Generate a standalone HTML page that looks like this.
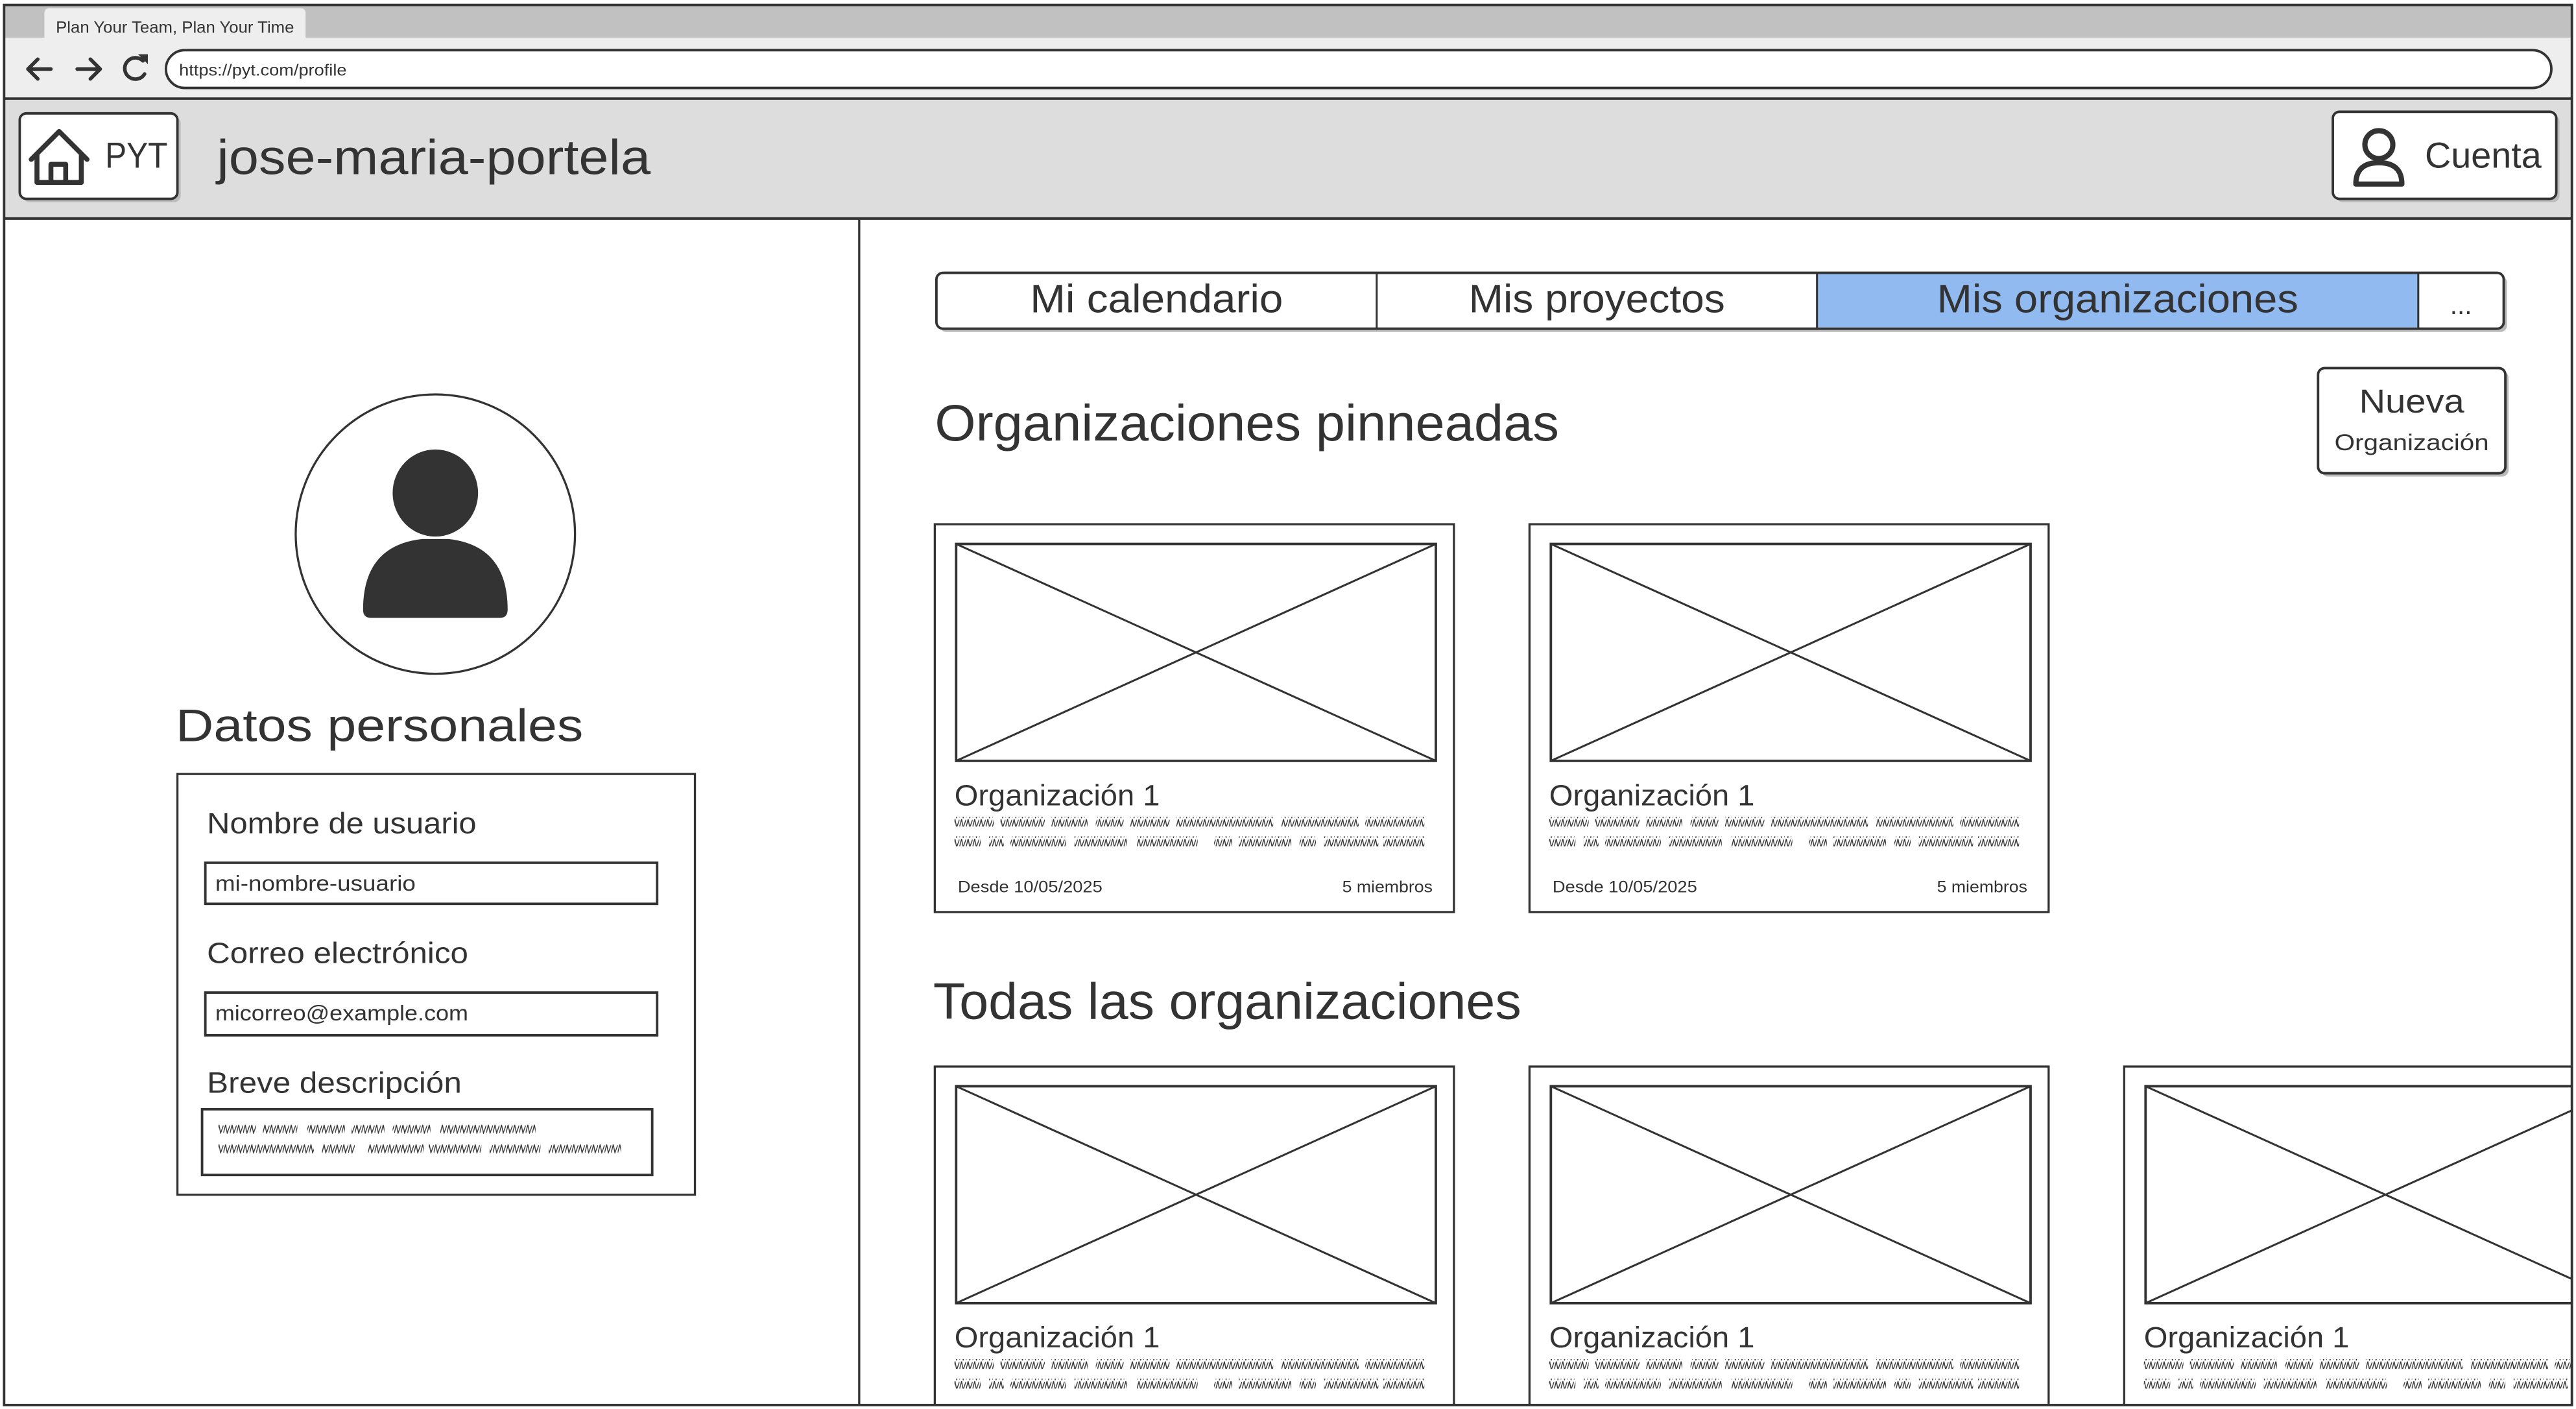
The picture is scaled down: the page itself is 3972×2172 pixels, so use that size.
<!DOCTYPE html>
<html><head><meta charset="utf-8">
<style>
html,body{margin:0;padding:0;background:#fff;overflow:hidden;}
svg{display:block;}
text{font-family:"Liberation Sans",sans-serif;fill:#333;}
</style></head>
<body>
<svg width="3972" height="2172" viewBox="0 0 1568 857.4" xmlns="http://www.w3.org/2000/svg">
<defs>
<pattern id="zz" width="4" height="6" patternUnits="userSpaceOnUse">
<path d="M0 5.5 L1.3 0.5 L2.3 5.5 L4 0.8" fill="none" stroke="#333" stroke-width="0.55"/>
</pattern>
</defs>
<rect x="0" y="0" width="1568" height="857.4" fill="#fff"/>
<!-- browser chrome -->
<rect x="2" y="3" width="1564" height="20" fill="#c1c1c1"/>
<path d="M27 24 V8 Q27 5 30 5 H183 Q186 5 186 8 V24 Z" fill="#eee"/>
<text x="34" y="20" font-size="10" textLength="145" lengthAdjust="spacingAndGlyphs">Plan Your Team, Plan Your Time</text>
<rect x="2" y="23" width="1564" height="37" fill="#eee"/>
<rect x="101" y="30.5" width="1452" height="23" rx="11.5" fill="#fff" stroke="#333" stroke-width="1.5"/>
<text x="109" y="46" font-size="10" textLength="102" lengthAdjust="spacingAndGlyphs">https://pyt.com/profile</text>
<g fill="none" stroke="#333" stroke-width="2.2" stroke-linecap="round" stroke-linejoin="round">
<path d="M31 42 H17 M23 36 L17 42 L23 48"/>
<path d="M47 42 H61 M55 36 L61 42 L55 48"/>
<path d="M87 37 A6.5 6.5 0 1 0 88 45"/>
</g>
<path d="M84 33 L90 33 L90 39 Z" fill="#333"/>
<!-- header -->
<rect x="2" y="60" width="1564" height="73" fill="#ddd"/>
<line x1="2" y1="60" x2="1566" y2="60" stroke="#333" stroke-width="1.5"/>
<line x1="2" y1="133" x2="1566" y2="133" stroke="#333" stroke-width="1.5"/>
<rect x="14" y="71" width="96" height="52" rx="4" fill="#bbb"/>
<rect x="12" y="69" width="96" height="52" rx="4" fill="#fff" stroke="#333" stroke-width="1.5"/>
<g fill="none" stroke="#333" stroke-width="3" stroke-linejoin="round" stroke-linecap="round">
<path d="M19 97 L36 80 L53 97"/>
<path d="M22.5 94 V111 H49.5 V94"/>
<path d="M31 111 V100 H40 V111"/>
</g>
<text x="64" y="102" font-size="22" textLength="38" lengthAdjust="spacingAndGlyphs">PYT</text>
<text x="132" y="106" font-size="30" textLength="264" lengthAdjust="spacingAndGlyphs">jose-maria-portela</text>
<rect x="1422" y="70" width="136" height="53" rx="4" fill="#bbb"/>
<rect x="1420" y="68" width="136" height="53" rx="4" fill="#fff" stroke="#333" stroke-width="1.5"/>
<circle cx="1448" cy="88" r="8.5" fill="none" stroke="#333" stroke-width="3.2"/>
<path d="M1434 112 Q1434 99 1448 99 Q1462 99 1462 112 Z" fill="none" stroke="#333" stroke-width="3.2" stroke-linejoin="round"/>
<text x="1476" y="102" font-size="22" textLength="71" lengthAdjust="spacingAndGlyphs">Cuenta</text>
<line x1="523" y1="133" x2="523" y2="855" stroke="#333" stroke-width="1.3"/>
<!-- avatar -->
<ellipse cx="265" cy="325" rx="85" ry="85" fill="#fff" stroke="#333" stroke-width="1.3"/>
<ellipse cx="265" cy="300" rx="26" ry="26.5" fill="#333"/>
<path d="M221 371 Q221 332 257 328 H273 Q309 332 309 371 Q309 376 304 376 H226 Q221 376 221 371 Z" fill="#333"/>
<text x="107" y="451" font-size="28" textLength="248" lengthAdjust="spacingAndGlyphs">Datos personales</text>
<!-- form -->
<rect x="108" y="471" width="315" height="256" fill="#fff" stroke="#333" stroke-width="1.3"/>
<text x="126" y="507" font-size="18" textLength="164" lengthAdjust="spacingAndGlyphs">Nombre de usuario</text>
<rect x="125" y="525" width="275" height="25" fill="#fff" stroke="#333" stroke-width="1.5"/>
<text x="131" y="542" font-size="13" textLength="122" lengthAdjust="spacingAndGlyphs">mi-nombre-usuario</text>
<text x="126" y="586" font-size="18" textLength="159" lengthAdjust="spacingAndGlyphs">Correo electrónico</text>
<rect x="125" y="604" width="275" height="26" fill="#fff" stroke="#333" stroke-width="1.5"/>
<text x="131" y="621" font-size="13" textLength="154" lengthAdjust="spacingAndGlyphs">micorreo@example.com</text>
<text x="126" y="665" font-size="18" textLength="155" lengthAdjust="spacingAndGlyphs">Breve descripción</text>
<rect x="123" y="675" width="274" height="40" fill="#fff" stroke="#333" stroke-width="1.5"/>
<g fill="url(#zz)">
<rect x="133" y="684" width="23" height="6"/><rect x="160" y="684" width="21" height="6"/><rect x="187" y="684" width="23" height="6"/><rect x="214" y="684" width="20" height="6"/><rect x="239" y="684" width="23" height="6"/><rect x="268" y="684" width="58" height="6"/>
<rect x="133" y="696" width="58" height="6"/><rect x="196" y="696" width="20" height="6"/><rect x="224" y="696" width="34" height="6"/><rect x="261" y="696" width="32" height="6"/><rect x="298" y="696" width="31" height="6"/><rect x="334" y="696" width="44" height="6"/>
</g>
<!-- tabs -->
<rect x="572" y="168" width="954" height="34" rx="4" fill="#bbb"/>
<rect x="570" y="166" width="954" height="34" rx="4" fill="#fff" stroke="#333" stroke-width="1.5"/>
<rect x="1106" y="166.8" width="366" height="32.4" fill="#91baf0"/>
<line x1="838" y1="166" x2="838" y2="200" stroke="#333" stroke-width="1.2"/>
<line x1="1106" y1="166" x2="1106" y2="200" stroke="#333" stroke-width="1.2"/>
<line x1="1472" y1="166" x2="1472" y2="200" stroke="#333" stroke-width="1.2"/>
<text x="704" y="190" font-size="24" text-anchor="middle" textLength="154" lengthAdjust="spacingAndGlyphs">Mi calendario</text>
<text x="972" y="190" font-size="24" text-anchor="middle" textLength="156" lengthAdjust="spacingAndGlyphs">Mis proyectos</text>
<text x="1289" y="190" font-size="24" text-anchor="middle" textLength="220" lengthAdjust="spacingAndGlyphs">Mis organizaciones</text>
<text x="1498" y="191" font-size="16" text-anchor="middle">...</text>
<text x="569" y="268" font-size="31" textLength="380" lengthAdjust="spacingAndGlyphs">Organizaciones pinneadas</text>
<rect x="1413" y="226" width="114" height="64" rx="4" fill="#bbb"/>
<rect x="1411" y="224" width="114" height="64" rx="4" fill="#fff" stroke="#333" stroke-width="1.5"/>
<text x="1468" y="251" font-size="20" text-anchor="middle" textLength="64" lengthAdjust="spacingAndGlyphs">Nueva</text>
<text x="1468" y="274" font-size="14" text-anchor="middle" textLength="94" lengthAdjust="spacingAndGlyphs">Organización</text>
<!-- card template -->
<g id="card">
<rect x="569" y="319" width="316" height="236" fill="#fff" stroke="#333" stroke-width="1.3"/>
<rect x="582" y="331" width="292" height="132" fill="#fff" stroke="#333" stroke-width="1.5"/>
<line x1="582" y1="331" x2="874" y2="463" stroke="#333" stroke-width="1.2"/>
<line x1="582" y1="463" x2="874" y2="331" stroke="#333" stroke-width="1.2"/>
<text x="581" y="490" font-size="18" textLength="125" lengthAdjust="spacingAndGlyphs">Organización 1</text>
<g fill="url(#zz)">
<rect x="581" y="497" width="24" height="6"/><rect x="609" y="497" width="27" height="6"/><rect x="640" y="497" width="22" height="6"/><rect x="667" y="497" width="17" height="6"/><rect x="688" y="497" width="24" height="6"/><rect x="716" y="497" width="59" height="6"/><rect x="780" y="497" width="47" height="6"/><rect x="831" y="497" width="36" height="6"/>
<rect x="581" y="509" width="16" height="6"/><rect x="602" y="509" width="9" height="6"/><rect x="615" y="509" width="34" height="6"/><rect x="654" y="509" width="32" height="6"/><rect x="692" y="509" width="37" height="6"/><rect x="739" y="509" width="11" height="6"/><rect x="754" y="509" width="32" height="6"/><rect x="791" y="509" width="10" height="6"/><rect x="806" y="509" width="33" height="6"/><rect x="842" y="509" width="25" height="6"/>
</g>
</g>
<g id="foot">
<text x="583" y="543" font-size="10" textLength="88" lengthAdjust="spacingAndGlyphs">Desde 10/05/2025</text>
<text x="872" y="543" font-size="10" text-anchor="end" textLength="55" lengthAdjust="spacingAndGlyphs">5 miembros</text>
</g>
<use href="#card" x="362" y="0"/>
<use href="#foot" x="362" y="0"/>
<text x="568" y="620" font-size="31" textLength="358" lengthAdjust="spacingAndGlyphs">Todas las organizaciones</text>
<svg x="0" y="0" width="1565" height="855" viewBox="0 0 1565 855" overflow="hidden">
<use href="#card" x="0" y="330"/>
<use href="#card" x="362" y="330"/>
<use href="#card" x="724" y="330"/>
</svg>
<!-- frame -->
<rect x="2.5" y="3" width="1563" height="852" fill="none" stroke="#333" stroke-width="1.5"/>
</svg>
</body></html>
